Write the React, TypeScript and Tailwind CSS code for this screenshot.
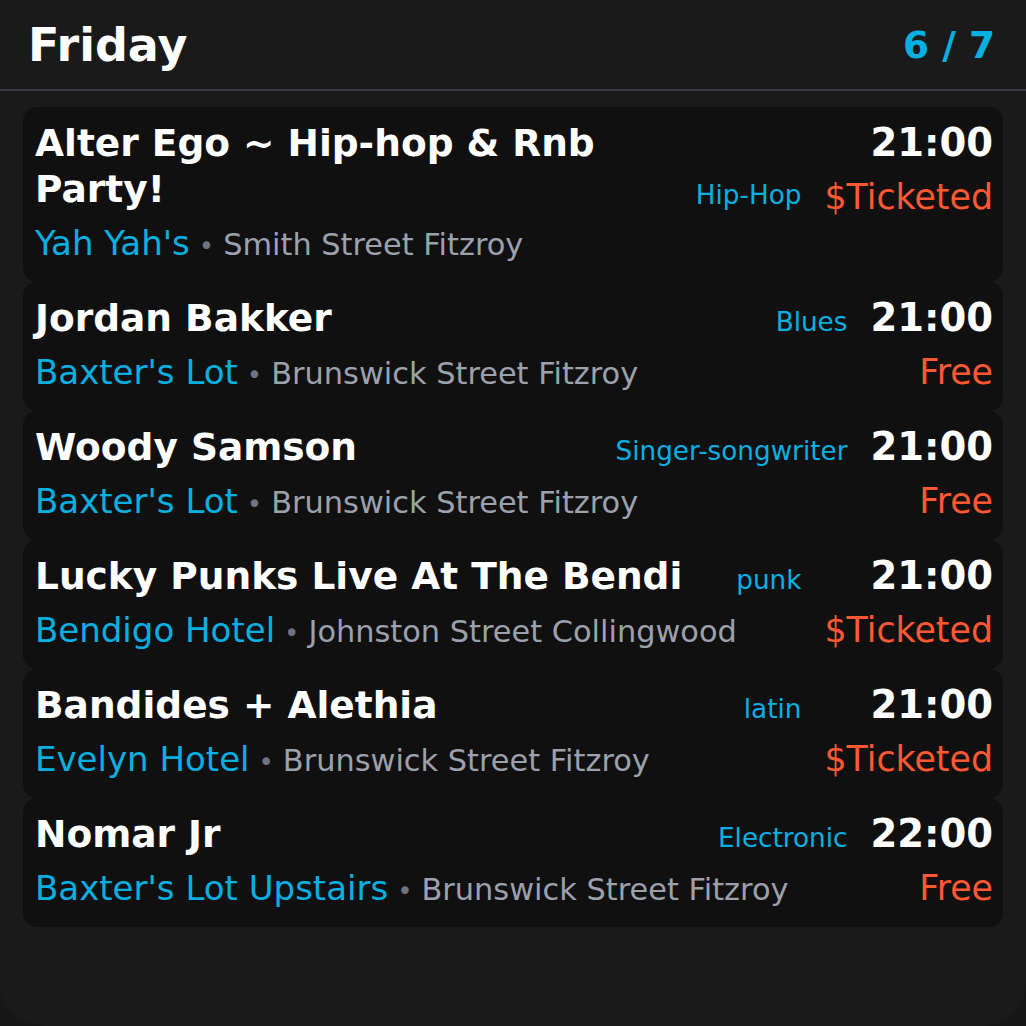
import React from "react";

interface Gig {
  title: string;
  venue: string;
  street: string;
  genre: string;
  genreLow?: boolean;
  time: string;
  price: string;
}

const gigs: Gig[] = [
  {
    title: "Alter Ego ~ Hip-hop & Rnb Party!",
    venue: "Yah Yah's",
    street: "Smith Street Fitzroy",
    genre: "Hip-Hop",
    genreLow: true,
    time: "21:00",
    price: "$Ticketed",
  },
  { title: "Jordan Bakker", venue: "Baxter's Lot", street: "Brunswick Street Fitzroy", genre: "Blues", time: "21:00", price: "Free" },
  { title: "Woody Samson", venue: "Baxter's Lot", street: "Brunswick Street Fitzroy", genre: "Singer-songwriter", time: "21:00", price: "Free" },
  { title: "Lucky Punks Live At The Bendi", venue: "Bendigo Hotel", street: "Johnston Street Collingwood", genre: "punk", time: "21:00", price: "$Ticketed" },
  { title: "Bandides + Alethia", venue: "Evelyn Hotel", street: "Brunswick Street Fitzroy", genre: "latin", time: "21:00", price: "$Ticketed" },
  { title: "Nomar Jr", venue: "Baxter's Lot Upstairs", street: "Brunswick Street Fitzroy", genre: "Electronic", time: "22:00", price: "Free" },
];

const GigCard: React.FC<{ gig: Gig }> = ({ gig }) => {
  const genre = (
    <span
      className={`text-right text-[26.25px] leading-[30px] text-[#08b0e2] ${gig.genreLow ? "mb-1 self-center" : ""}`}
    >
      {gig.genre}
    </span>
  );
  return (
    <div className="flex items-start rounded-[14px] bg-[#101010] pt-[13px] pb-[15px] pl-3 pr-[10px]">
      <div className="flex min-w-0 flex-1 flex-col">
        <h3 className="text-[37.5px] font-bold leading-[46px] text-white">{gig.title}</h3>
        <p className="mt-[7px] whitespace-nowrap text-[34px] leading-[48px] text-[#08b0e2]">
          {gig.venue}
          <span className="mx-[9px] text-[26px] leading-none text-[#6f7480]">•</span>
          <span className="text-[30.4px] leading-none text-[#9ca1ac]">{gig.street}</span>
        </p>
      </div>
      <div className="grid grid-cols-[auto_auto] items-baseline gap-x-[23px] gap-y-[7px]">
        {gig.genreLow ? <span /> : genre}
        <span className="text-right text-[38.5px] font-bold leading-[46px] text-white">{gig.time}</span>
        {gig.genreLow ? genre : <span />}
        <span className="text-right text-[34.8px] leading-[48px] text-[#ff5833]">{gig.price}</span>
      </div>
    </div>
  );
};

export default function App() {
  return (
    <div className="h-[1026px] w-full bg-[#171717] font-['DejaVu_Sans',sans-serif]">
      <div className="h-full rounded-b-[44px] bg-[#1a1a1a]">
        <header className="flex items-center justify-between border-b-2 border-[#353a45] pt-[18px] pb-[17px] pl-[28px] pr-[31px]">
          <h1 className="text-[46px] font-bold leading-[54px] text-white">Friday</h1>
          <span className="text-[37.5px] font-bold leading-[44px] text-[#08b0e2]">6 / 7</span>
        </header>
        <div className="flex flex-col px-[23px] pt-4">
          {gigs.map((gig, i) => (
            <GigCard key={i} gig={gig} />
          ))}
        </div>
      </div>
    </div>
  );
}
